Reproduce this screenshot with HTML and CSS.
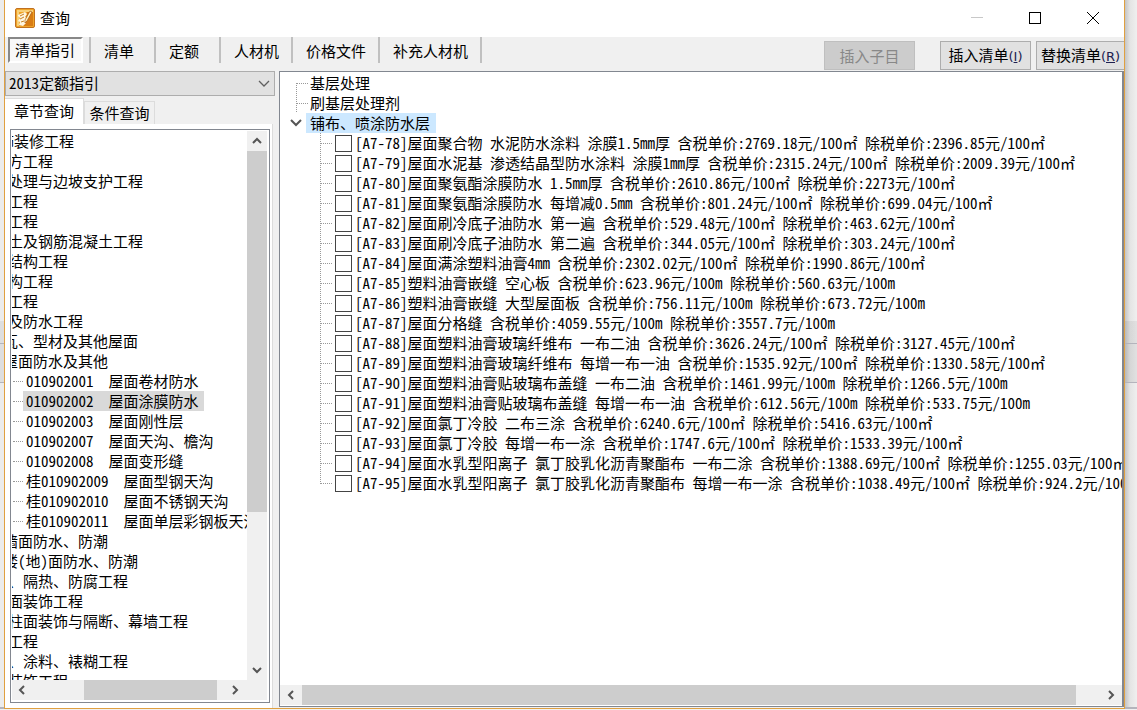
FILE: index.html
```html
<!DOCTYPE html>
<html lang="zh-CN">
<head>
<meta charset="utf-8">
<title>查询</title>
<link rel="stylesheet" href="styles.css">
</head>
<body>
<div class="desktop">
  <div class="edge edge-left"><div class="edge-a"></div><div class="edge-b"></div><div class="edge-c"></div></div>
  <main class="window">
    <header class="titlebar">
      <svg class="logo" viewBox="0 0 20 20" width="20" height="20" aria-hidden="true">
        <rect x="0.5" y="0.5" width="19" height="19" rx="1.5" fill="#f0a428" stroke="#c07020"/>
        <path d="M2 2h16v2H4v14H2z" fill="#f8d078"/>
        <path d="M12 4h6v14H4l6-2z" fill="#d87c14"/>
        <path d="M3 7l7-3 2 2-2 3 2 1-2 3 1 2-3 3-4-1 1-3-2-1 2-3-2-2z" fill="#fff6e0"/>
        <path d="M5 8l4-2M5 11l4-2M6 14l3-1" stroke="#c88020" fill="none"/>
        <path d="M15 3l2 1-5 9-2 2v-3z" fill="#fff2c0" stroke="#a85810" stroke-width="0.7"/>
      </svg>
      <h1 class="title">查询</h1>
      <div class="captions">
        <button class="caption" aria-label="最小化" disabled><svg width="12" height="12" viewBox="0 0 12 12"><path d="M0 5.5h12" stroke="#c8c8c8"/></svg></button>
        <button class="caption" aria-label="最大化"><svg width="12" height="12" viewBox="0 0 12 12"><rect x="0.5" y="0.5" width="11" height="11" fill="none" stroke="#000"/></svg></button>
        <button class="caption" aria-label="关闭"><svg width="12" height="12" viewBox="0 0 12 12"><path d="M0 0l12 12M12 0L0 12" stroke="#000"/></svg></button>
      </div>
    </header>
    <nav class="toolbar">
      <div class="modes">
        <div class="mode current-mode"><button class="mode-btn pressed">清单指引</button></div>
        <div class="mode"><button class="mode-btn">清单</button></div>
        <div class="mode"><button class="mode-btn">定额</button></div>
        <div class="mode"><button class="mode-btn">人材机</button></div>
        <div class="mode"><button class="mode-btn">价格文件</button></div>
        <div class="mode"><button class="mode-btn">补充人材机</button></div>
      </div>
      <div class="actions">
        <button class="action first" disabled>插入子目</button>
        <button class="action">插入清单<span class="key">(<u>I</u>)</span></button>
        <button class="action last">替换清单<span class="key">(<u>R</u>)</span></button>
      </div>
    </nav>
    <div class="content">
      <section class="side">
        <div class="combo">
          <select class="combo-select" aria-label="定额指引"><option>2013定额指引</option></select>
          <svg class="combo-arrow" width="12" height="8" viewBox="0 0 12 8"><path d="M1 1l5 5 5-5" fill="none" stroke="#606060" stroke-width="1.3"/></svg>
        </div>
        <div class="tabs"><button class="tab active">章节查询</button><button class="tab">条件查询</button></div>
        <div class="pane">
          <div class="treebox">
            <div class="tree-view">
              <ul class="tree">
                <li class="root">饰装修工程</li>
                <li class="chapter">方工程</li>
                <li class="chapter">处理与边坡支护工程</li>
                <li class="chapter">工程</li>
                <li class="chapter">工程</li>
                <li class="chapter">土及钢筋混凝土工程</li>
                <li class="chapter">结构工程</li>
                <li class="chapter">构工程</li>
                <li class="chapter">工程</li>
                <li class="chapter">及防水工程</li>
                <li class="part">瓦、型材及其他屋面</li>
                <li class="part">屋面防水及其他</li>
                <li class="leaf"><span>010902001  屋面卷材防水</span></li>
                <li class="leaf"><span class="selected">010902002  屋面涂膜防水</span></li>
                <li class="leaf"><span>010902003  屋面刚性层</span></li>
                <li class="leaf"><span>010902007  屋面天沟、檐沟</span></li>
                <li class="leaf"><span>010902008  屋面变形缝</span></li>
                <li class="leaf"><span>桂010902009  屋面型钢天沟</span></li>
                <li class="leaf"><span>桂010902010  屋面不锈钢天沟</span></li>
                <li class="leaf"><span>桂010902011  屋面单层彩钢板天沟</span></li>
                <li class="part">墙面防水、防潮</li>
                <li class="part">楼(地)面防水、防潮</li>
                <li class="chapter">、隔热、防腐工程</li>
                <li class="chapter">面装饰工程</li>
                <li class="chapter">柱面装饰与隔断、幕墙工程</li>
                <li class="chapter">工程</li>
                <li class="chapter">、涂料、裱糊工程</li>
                <li class="chapter">装饰工程</li>
              </ul>
            </div>
            <div class="vbar">
              <button class="arrow" aria-label="向上"><svg width="10" height="8" viewBox="0 0 10 8"><path d="M1 6l4-4 4 4" class="chev"/></svg></button>
              <div class="vtrack"><div class="vthumb"></div></div>
              <button class="arrow" aria-label="向下"><svg width="10" height="8" viewBox="0 0 10 8"><path d="M1 2l4 4 4-4" class="chev"/></svg></button>
            </div>
            <div class="hbar">
              <button class="arrow" aria-label="向左"><svg width="8" height="10" viewBox="0 0 8 10"><path d="M6 1L2 5l4 4" class="chev"/></svg></button>
              <div class="htrack side-track"><div class="hthumb"></div></div>
              <button class="arrow" aria-label="向右"><svg width="8" height="10" viewBox="0 0 8 10"><path d="M2 1l4 4-4 4" class="chev"/></svg></button>
            </div>
          </div>
        </div>
      </section>
      <section class="detail">
        <div class="detail-view">
          <ul class="groups">
            <li class="group"><span class="group-name">基层处理</span></li>
            <li class="group"><span class="group-name">刷基层处理剂</span></li>
            <li class="group open"><svg class="twist" width="12" height="8" viewBox="0 0 12 8"><path d="M1 1l5 5 5-5" class="chev"/></svg><span class="group-name current">铺布、喷涂防水层</span></li>
          </ul>
          <ul class="items">
            <li><label><input type="checkbox">[A7-78]屋面聚合物 水泥防水涂料 涂膜1.5mm厚 含税单价:2769.18元/100㎡ 除税单价:2396.85元/100㎡</label></li>
            <li><label><input type="checkbox">[A7-79]屋面水泥基 渗透结晶型防水涂料 涂膜1mm厚 含税单价:2315.24元/100㎡ 除税单价:2009.39元/100㎡</label></li>
            <li><label><input type="checkbox">[A7-80]屋面聚氨酯涂膜防水 1.5mm厚 含税单价:2610.86元/100㎡ 除税单价:2273元/100㎡</label></li>
            <li><label><input type="checkbox">[A7-81]屋面聚氨酯涂膜防水 每增减0.5mm 含税单价:801.24元/100㎡ 除税单价:699.04元/100㎡</label></li>
            <li><label><input type="checkbox">[A7-82]屋面刷冷底子油防水 第一遍 含税单价:529.48元/100㎡ 除税单价:463.62元/100㎡</label></li>
            <li><label><input type="checkbox">[A7-83]屋面刷冷底子油防水 第二遍 含税单价:344.05元/100㎡ 除税单价:303.24元/100㎡</label></li>
            <li><label><input type="checkbox">[A7-84]屋面满涂塑料油膏4mm 含税单价:2302.02元/100㎡ 除税单价:1990.86元/100㎡</label></li>
            <li><label><input type="checkbox">[A7-85]塑料油膏嵌缝 空心板 含税单价:623.96元/100m 除税单价:560.63元/100m</label></li>
            <li><label><input type="checkbox">[A7-86]塑料油膏嵌缝 大型屋面板 含税单价:756.11元/100m 除税单价:673.72元/100m</label></li>
            <li><label><input type="checkbox">[A7-87]屋面分格缝 含税单价:4059.55元/100m 除税单价:3557.7元/100m</label></li>
            <li><label><input type="checkbox">[A7-88]屋面塑料油膏玻璃纤维布 一布二油 含税单价:3626.24元/100㎡ 除税单价:3127.45元/100㎡</label></li>
            <li><label><input type="checkbox">[A7-89]屋面塑料油膏玻璃纤维布 每增一布一油 含税单价:1535.92元/100㎡ 除税单价:1330.58元/100㎡</label></li>
            <li><label><input type="checkbox">[A7-90]屋面塑料油膏贴玻璃布盖缝 一布二油 含税单价:1461.99元/100m 除税单价:1266.5元/100m</label></li>
            <li><label><input type="checkbox">[A7-91]屋面塑料油膏贴玻璃布盖缝 每增一布一油 含税单价:612.56元/100m 除税单价:533.75元/100m</label></li>
            <li><label><input type="checkbox">[A7-92]屋面氯丁冷胶 二布三涂 含税单价:6240.6元/100㎡ 除税单价:5416.63元/100㎡</label></li>
            <li><label><input type="checkbox">[A7-93]屋面氯丁冷胶 每增一布一涂 含税单价:1747.6元/100㎡ 除税单价:1533.39元/100㎡</label></li>
            <li><label><input type="checkbox">[A7-94]屋面水乳型阳离子 氯丁胶乳化沥青聚酯布 一布二涂 含税单价:1388.69元/100㎡ 除税单价:1255.03元/100㎡</label></li>
            <li><label><input type="checkbox">[A7-95]屋面水乳型阳离子 氯丁胶乳化沥青聚酯布 每增一布一涂 含税单价:1038.49元/100㎡ 除税单价:924.2元/100㎡</label></li>
          </ul>
        </div>
        <div class="hbar">
          <button class="arrow wide" aria-label="向左"><svg width="8" height="10" viewBox="0 0 8 10"><path d="M6 1L2 5l4 4" class="chev"/></svg></button>
          <div class="htrack detail-track"><div class="hthumb"></div></div>
          <button class="arrow wide" aria-label="向右"><svg width="8" height="10" viewBox="0 0 8 10"><path d="M2 1l4 4-4 4" class="chev"/></svg></button>
        </div>
      </section>
    </div>
  </main>
  <div class="edge edge-right"><div class="edge-a"></div><div class="edge-b"></div><div class="edge-c"></div></div>
</div>
</body>
</html>
```
FILE: styles.css
```css
* { box-sizing: border-box; }
body {
  margin: 0;
  color: #000;
  font: 15px/20px "Noto Sans CJK SC", sans-serif;
  font-feature-settings: "hwid";
  font-kerning: none;
}
ul { list-style: none; margin: 0; padding: 0; }
button { font: inherit; font-feature-settings: inherit; color: inherit; padding: 0; margin: 0; border: 0; background: none; white-space: nowrap; }

.desktop { display: grid; grid-template-columns: 4px 1fr 12px; height: 100vh; overflow: hidden; background: #f0f0f0; padding-bottom: 1px; }
.edge { display: flex; flex-direction: column; }
.edge-left { background: #ececec; }
.edge-right { background: linear-gradient(90deg, #c4c4c4, #e4e4e4 5px, #efefef); }
.edge-a { height: 344px; border-bottom: 1px solid #b4b4bc; background: linear-gradient(rgba(0, 0, 0, 0.06), rgba(0, 0, 0, 0.06)) no-repeat bottom / 100% 22px; }
.edge-b { height: 39px; border-bottom: 1px solid #b4b4bc; background: rgba(0, 0, 0, 0.06); }
.edge-c { flex: 1; border-bottom: 2px solid #b4b4bc; }

.window { display: flex; flex-direction: column; min-width: 0; min-height: 0; background: #f0f0f0; border: 1px solid #e0a040; border-top: 0; }

.titlebar { display: flex; align-items: center; height: 37px; flex: none; background: #fff; padding: 0 2px 2px 10px; }
.logo { flex: none; }
.title { flex: 1; margin: 0 0 0 5px; font-size: 15px; font-weight: 400; }
.captions { display: flex; }
.caption { width: 58px; height: 35px; display: flex; align-items: center; justify-content: center; }

.toolbar { display: flex; justify-content: space-between; height: 34px; flex: none; overflow: hidden; }
.modes { display: flex; height: 26px; padding-left: 3px; }
.mode { display: flex; min-width: 65px; padding: 0 12px 0 13px; border-right: 2px solid #c0c0c0; }
.mode.current-mode { padding: 0 6px 0 0; }
.mode-btn { line-height: 25px; }
.mode-btn.pressed { padding: 0 6px 0 5px; background: #f8f8f8; border: 2px solid #888; border-right-color: #fff; border-bottom-color: #fff; line-height: 22px; }
.actions { display: flex; padding-top: 4px; }
.action { width: 91px; height: 29px; background: #e1e1e1; border: 1px solid #adadad; margin-right: 5px; overflow: hidden; }
.action.first { background: #ccc; color: #888; border-color: #bfbfbf; margin-right: 25px; }
.action.last { width: 88px; margin-right: 0; border-right: 0; }
.key { font-family: "DejaVu Sans", sans-serif; font-size: 13px; color: #202050; }

.content { flex: 1; min-height: 0; display: grid; grid-template-columns: 270px 1fr; gap: 4px; }
.side { display: flex; flex-direction: column; min-width: 0; min-height: 0; }
.combo { position: relative; height: 25px; flex: none; }
.combo-select { appearance: none; width: 100%; height: 100%; padding: 0 3px 2px; border: 1px solid #adadad; border-radius: 0; background: #e1e1e1; color: #000; font: inherit; font-feature-settings: inherit; }
.combo-arrow { position: absolute; right: 5px; top: 9px; pointer-events: none; }
.tabs { display: flex; align-items: flex-end; height: 28px; flex: none; }
.tab { width: 71px; height: 23px; border: 1px solid #dcdcdc; border-bottom: 0; }
.tab.active { width: 79px; height: 26px; padding-bottom: 2px; background: #fff; border-left: 0; }
.pane { flex: 1; min-height: 0; display: flex; background: #fff; border-right: 1px solid #dcdcdc; padding: 5px 2px 5px 5px; margin-right: 2px; }
.treebox { flex: 1; min-width: 0; min-height: 0; display: grid; grid-template: 1fr 20px / 1fr 20px; border: 1px solid #828790; padding: 1px 2px 2px 1px; background: #fff; }
.tree-view { overflow: hidden; min-height: 0; min-width: 0; }
.tree { margin-left: -13px; white-space: nowrap; }
.tree li { height: 20px; }
.tree .chapter { padding-left: 9px; }
.tree .part { padding-left: 4px; }
.tree .leaf { display: flex; align-items: center; padding-left: 14px; }
.leaf::before { content: ""; width: 10px; flex: none; border-top: 1px dotted #999; }
.leaf span { padding: 0 5px 0 3px; white-space: pre; }
.leaf .selected { background: #d9d9d9; }

.chev { fill: none; stroke: #555; stroke-width: 2; }
.arrow { width: 20px; height: 20px; display: flex; flex: none; align-items: center; justify-content: center; background: #f0f0f0; }
.arrow.wide { width: 22px; }
.vbar { display: flex; flex-direction: column; background: #f0f0f0; }
.vtrack { flex: 1; }
.vthumb { height: 71%; background: #cdcdcd; }
.hbar { display: flex; height: 20px; flex: none; background: #f0f0f0; }
.treebox .hbar { grid-column: 1 / 3; padding-right: 22px; }
.htrack { flex: 1; display: flex; }
.hthumb { background: #cdcdcd; }
.side-track .hthumb { width: 69%; margin-left: 27%; }
.detail-track .hthumb { width: 97%; }

.detail { display: flex; flex-direction: column; min-width: 0; min-height: 0; background: #fff; border: 1px solid #828790; border-right-width: 2px; padding-bottom: 1px; margin-bottom: 1px; }
.detail-view { flex: 1; min-height: 0; overflow: hidden; padding: 1px 0 0 16px; white-space: nowrap; }
.group, .items li { height: 20px; background: repeating-linear-gradient(#999 0 1px, transparent 1px 2px) no-repeat left top / 1px 100%; }
.group { display: flex; align-items: center; }
.group::before { content: ""; width: 12px; border-top: 1px dotted #999; }
.group:first-child { background-position: left bottom; background-size: 1px 10px; }
.group-name { padding: 0 4px 0 2px; }
.group.open { background: none; margin-left: -6px; }
.group.open::before { display: none; }
.twist { margin-right: 4px; }
.group .current { background: #cce8ff; padding: 0 6px 0 4px; }
.items { margin-left: 24px; }
.items li:last-child { background-size: 1px 10px; }
.items label { display: flex; align-items: center; height: 20px; }
.items label::before { content: ""; width: 12px; flex: none; border-top: 1px dotted #999; }
.items input { appearance: none; flex: none; width: 17px; height: 17px; margin: 0 3px; border: 1px solid #444; background: #fff; }
```
